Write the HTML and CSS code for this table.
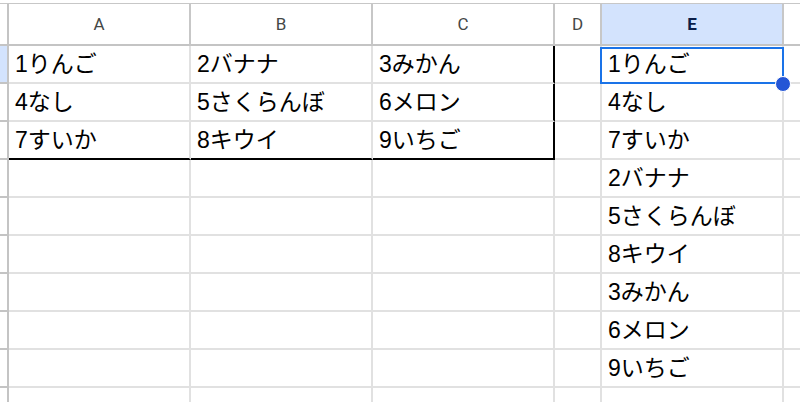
FILE: index.html
```html
<!DOCTYPE html>
<html lang="ja">
<head>
<meta charset="utf-8">
<link rel="stylesheet" href="styles.css">
</head>
<body>
<div class="sheet">
  <div class="corner"></div>
  <div class="colhead">A</div>
  <div class="colhead">B</div>
  <div class="colhead">C</div>
  <div class="colhead">D</div>
  <div class="colhead sel">E</div>
  <div class="colhead last"></div>

  <div class="rowhead sel"></div>
  <div class="cell">1りんご</div>
  <div class="cell">2バナナ</div>
  <div class="cell br">3みかん</div>
  <div class="cell"></div>
  <div class="cell active">1りんご<span class="focus"></span><span class="handle"></span></div>
  <div class="cell last"></div>

  <div class="rowhead"></div>
  <div class="cell">4なし</div>
  <div class="cell">5さくらんぼ</div>
  <div class="cell br">6メロン</div>
  <div class="cell"></div>
  <div class="cell">4なし</div>
  <div class="cell last"></div>

  <div class="rowhead"></div>
  <div class="cell bb">7すいか</div>
  <div class="cell bb">8キウイ</div>
  <div class="cell br bb">9いちご</div>
  <div class="cell"></div>
  <div class="cell">7すいか</div>
  <div class="cell last"></div>

  <div class="rowhead"></div>
  <div class="cell"></div>
  <div class="cell"></div>
  <div class="cell"></div>
  <div class="cell"></div>
  <div class="cell">2バナナ</div>
  <div class="cell last"></div>

  <div class="rowhead"></div>
  <div class="cell"></div>
  <div class="cell"></div>
  <div class="cell"></div>
  <div class="cell"></div>
  <div class="cell">5さくらんぼ</div>
  <div class="cell last"></div>

  <div class="rowhead"></div>
  <div class="cell"></div>
  <div class="cell"></div>
  <div class="cell"></div>
  <div class="cell"></div>
  <div class="cell">8キウイ</div>
  <div class="cell last"></div>

  <div class="rowhead"></div>
  <div class="cell"></div>
  <div class="cell"></div>
  <div class="cell"></div>
  <div class="cell"></div>
  <div class="cell">3みかん</div>
  <div class="cell last"></div>

  <div class="rowhead"></div>
  <div class="cell"></div>
  <div class="cell"></div>
  <div class="cell"></div>
  <div class="cell"></div>
  <div class="cell">6メロン</div>
  <div class="cell last"></div>

  <div class="rowhead"></div>
  <div class="cell"></div>
  <div class="cell"></div>
  <div class="cell"></div>
  <div class="cell"></div>
  <div class="cell">9いちご</div>
  <div class="cell last"></div>

  <div class="rowhead"></div>
  <div class="cell"></div>
  <div class="cell"></div>
  <div class="cell"></div>
  <div class="cell"></div>
  <div class="cell"></div>
  <div class="cell last"></div>
</div>
</body>
</html>
```

FILE: styles.css
```css
html, body {
  margin: 0;
  padding: 0;
  background: #ffffff;
  overflow: hidden;
}
body {
  padding-top: 3px;
  height: 399px;
}
.sheet {
  display: grid;
  grid-template-columns: 9px 182px 182px 182px 47px 182px 16px;
  grid-template-rows: 42px repeat(10, 38px);
  border-top: 1px solid #c7c7c7;
  width: 800px;
}
.sheet > div {
  box-sizing: border-box;
}
.corner {
  background: #ffffff;
  border-right: 2px solid #c4c4c4;
  border-bottom: 2px solid #c4c4c4;
}
.colhead {
  display: flex;
  align-items: center;
  justify-content: center;
  border-right: 2px solid #c7c7c7;
  border-bottom: 2px solid #c4c4c4;
  font-family: Roboto, "Liberation Sans", Arial, sans-serif;
  font-size: 17px;
  color: #444746;
  line-height: 1;
}
.colhead.sel {
  background: #d3e3fd;
  color: #0b1e49;
  font-weight: bold;
}
.colhead.last {
  border-right: none;
}
.rowhead {
  background: #ffffff;
  border-right: 2px solid #c4c4c4;
  border-bottom: 2px solid #c4c4c4;
}
.rowhead.sel {
  background: #d3e3fd;
}
.cell {
  position: relative;
  display: flex;
  align-items: center;
  padding-left: 6px;
  border-right: 2px solid #e1e1e1;
  border-bottom: 2px solid #e1e1e1;
  font-family: "Liberation Sans", "Noto Sans CJK JP", sans-serif;
  font-size: 23px;
  line-height: 1;
  color: #000000;
  white-space: nowrap;
}
.cell.active {
  z-index: 2;
}
.cell.last {
  border-right: none;
}
.cell.br {
  border-right-color: #000000;
}
.cell.bb {
  border-bottom-color: #000000;
}
.focus {
  position: absolute;
  left: -2px;
  top: 1px;
  right: -2px;
  bottom: -2px;
  border: 2px solid #1a73e8;
}
.handle {
  position: absolute;
  left: 173px;
  top: 30px;
  width: 14px;
  height: 14px;
  border: 1px solid #ffffff;
  border-radius: 50%;
  background: #2456d6;
}
```
